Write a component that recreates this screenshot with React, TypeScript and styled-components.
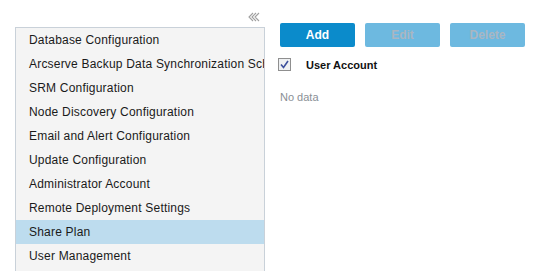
import React from "react";
import styled, { createGlobalStyle } from "styled-components";

const GlobalStyle = createGlobalStyle`
    html, body {
        margin: 0;
        padding: 0;
        background: #ffffff;
        font-family: "Liberation Sans", Arial, sans-serif;
        font-size: 12px;
        color: #222222;
    }
`;

const Page = styled.div`
    display: flex;
    width: 541px;
    height: 271px;
    overflow: hidden;
`;

const Sidebar = styled.div`
    width: 250px;
    margin-left: 15px;
    display: flex;
    flex-direction: column;
`;

const SidebarHeader = styled.div`
    height: 27px;
    display: flex;
    justify-content: flex-end;
    align-items: flex-end;
    padding: 0 5px 5px 0;
    box-sizing: border-box;
`;

const CollapseButton = styled.button`
    border: none;
    background: none;
    padding: 0;
    width: 12px;
    height: 10px;
    display: flex;
    cursor: pointer;
`;

const Menu = styled.ul`
    list-style: none;
    margin: 0;
    padding: 0;
    flex: 1;
    background: #f4f4f4;
    border: 1px solid #c9d1d9;
    border-bottom: none;
    overflow: hidden;
`;

const MenuItem = styled.li<{ $active?: boolean }>`
    height: 24px;
    line-height: 24px;
    padding-left: 13px;
    white-space: nowrap;
    overflow: hidden;
    font-size: 12px;
    letter-spacing: 0.2px;
    color: #1a1a1a;
    background: ${p => (p.$active ? "#bddcee" : "transparent")};
    cursor: pointer;
`;

const Content = styled.div`
    flex: 1;
    padding: 23px 0 0 15px;
`;

const Toolbar = styled.div`
    display: flex;
    gap: 10px;
`;

const ActionButton = styled.button<{ $disabled?: boolean }>`
    width: 75px;
    height: 24px;
    border: none;
    border-radius: 2px;
    font-family: inherit;
    font-size: 12px;
    font-weight: bold;
    color: ${p => (p.$disabled ? "#a9b6c2" : "#ffffff")};
    background: ${p => (p.$disabled ? "#6db9e0" : "#0b8bcb")};
    padding: 0;
`;

const CheckRow = styled.label`
    display: flex;
    align-items: center;
    margin-top: 11px;
    height: 13px;
`;

const CheckBox = styled.span`
    width: 11px;
    height: 11px;
    border: 1px solid #8f8f8f;
    background: #eef0f2;
    display: flex;
    align-items: center;
    justify-content: center;
    margin-left: -2px;
`;

const CheckLabel = styled.span`
    margin-left: 15px;
    margin-top: 1px;
    font-weight: bold;
    font-size: 11px;
    color: #111111;
`;

const Empty = styled.div`
    margin-top: 20px;
    font-size: 11px;
    color: #8a8f96;
`;

const items = [
    "Database Configuration",
    "Arcserve Backup Data Synchronization Schedule",
    "SRM Configuration",
    "Node Discovery Configuration",
    "Email and Alert Configuration",
    "Update Configuration",
    "Administrator Account",
    "Remote Deployment Settings",
    "Share Plan",
    "User Management",
];

export default function App() {
    return (
        <>
            <GlobalStyle />
            <Page>
                <Sidebar>
                    <SidebarHeader>
                        <CollapseButton>
                            <svg width="12" height="10" viewBox="0 0 12 10">
                                <path d="M5 1 L1 5 L5 9 M8 1 L4 5 L8 9 M11 1 L7 5 L11 9" fill="none" stroke="#a0a0a0" strokeWidth="1.1" />
                            </svg>
                        </CollapseButton>
                    </SidebarHeader>
                    <Menu>
                        {items.map(item => (
                            <MenuItem key={item} $active={item === "Share Plan"}>
                                {item}
                            </MenuItem>
                        ))}
                    </Menu>
                </Sidebar>
                <Content>
                    <Toolbar>
                        <ActionButton>Add</ActionButton>
                        <ActionButton $disabled>Edit</ActionButton>
                        <ActionButton $disabled>Delete</ActionButton>
                    </Toolbar>
                    <CheckRow>
                        <CheckBox>
                            <svg width="9" height="9" viewBox="0 0 9 9">
                                <path d="M1 4.5 L3.5 7.5 L8 1" fill="none" stroke="#3b4f9c" strokeWidth="1.6" />
                            </svg>
                        </CheckBox>
                        <CheckLabel>User Account</CheckLabel>
                    </CheckRow>
                    <Empty>No data</Empty>
                </Content>
            </Page>
        </>
    );
}
